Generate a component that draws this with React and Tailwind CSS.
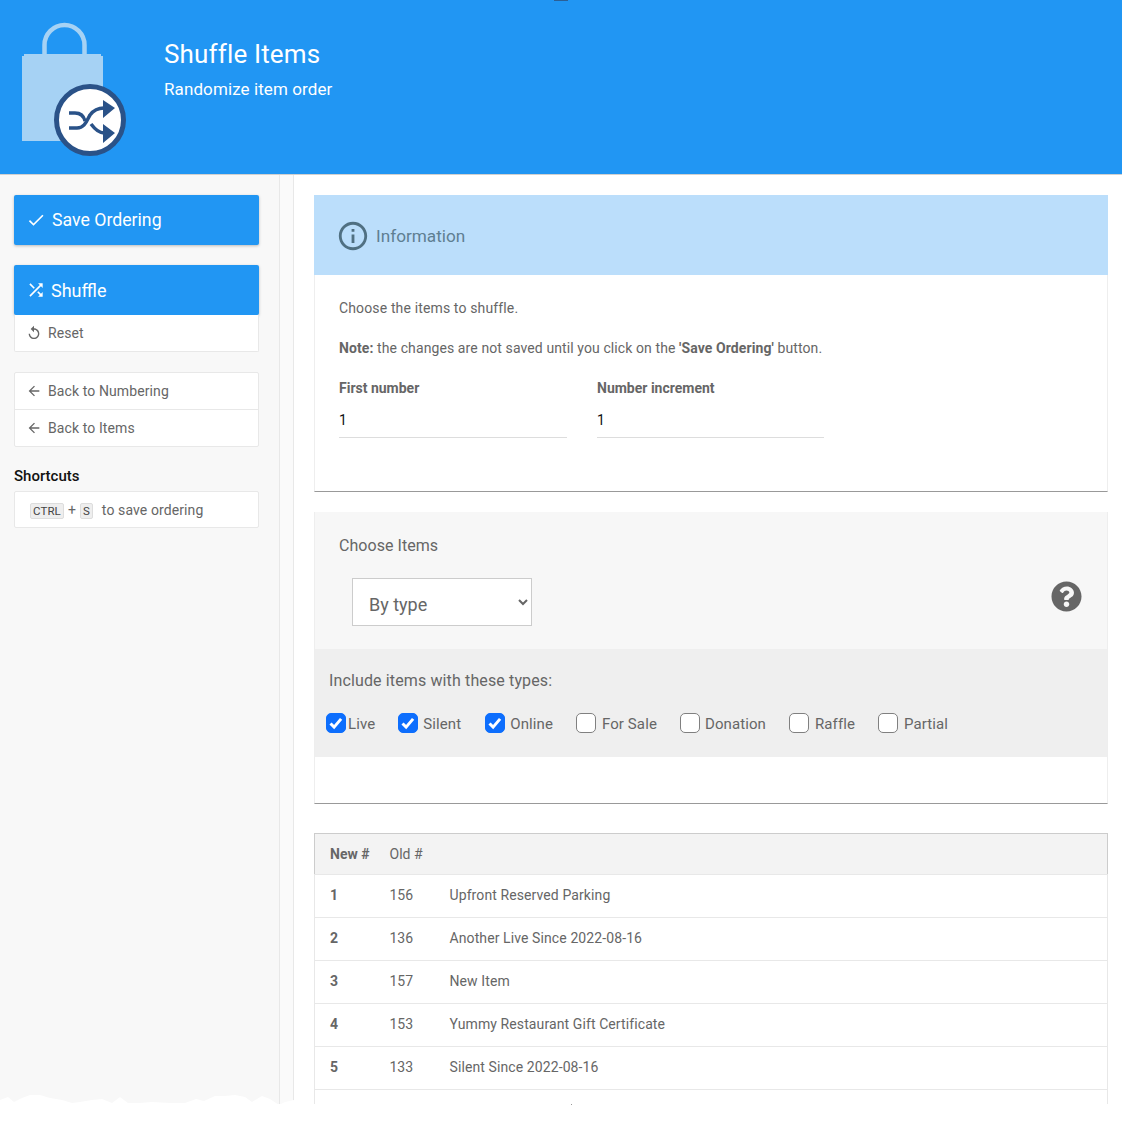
import React from 'react';
import { MdCheck, MdShuffle, MdReplay, MdArrowBack, MdInfoOutline } from 'react-icons/md';
import { FaQuestionCircle } from 'react-icons/fa';

const items = [
  { id: 1, old: 156, name: 'Upfront Reserved Parking' },
  { id: 2, old: 136, name: 'Another Live Since 2022-08-16' },
  { id: 3, old: 157, name: 'New Item' },
  { id: 4, old: 153, name: 'Yummy Restaurant Gift Certificate' },
  { id: 5, old: 133, name: 'Silent Since 2022-08-16' },
];

const types = [
  { label: 'Live', checked: true, className: 'ml-[-3px] gap-[2px]' },
  { label: 'Silent', checked: true, className: 'ml-[23px] gap-[5px]' },
  { label: 'Online', checked: true, className: 'ml-[24px] gap-[5px]' },
  { label: 'For Sale', checked: false, className: 'ml-[23px] gap-[6px]' },
  { label: 'Donation', checked: false, className: 'ml-[23px] gap-[5px]' },
  { label: 'Raffle', checked: false, className: 'ml-[23px] gap-[6px]' },
  { label: 'Partial', checked: false, className: 'ml-[23px] gap-[6px]' },
];

function BagLogo() {
  return (
    <svg width="130" height="145" viewBox="0 0 130 145" className="block">
      <path d="M44.5 41V31a20 20 0 0 1 40 0v10" fill="none" stroke="#a6d2f4" strokeWidth="4.5" />
      <path d="M24 40h77v2h2v85H22V42h2z" fill="#a6d2f4" />
      <circle cx="90" cy="106" r="33.5" fill="#fff" stroke="#2a5288" strokeWidth="5" />
      <path d="M69 99h6c6 0 9 4 10 8" fill="none" stroke="#2a5288" strokeWidth="3.5" />
      <path d="M69 114h8c8 0 10-8 13-13 3-4 7-7 14-7" fill="none" stroke="#2a5288" strokeWidth="3.5" />
      <path d="M91 110c3 4 7 9 13 9" fill="none" stroke="#2a5288" strokeWidth="3.5" />
      <path d="M103 86l12 8-12 10zM103 110l12 9-12 10z" fill="#2a5288" />
    </svg>
  );
}

function TypeCheck({ label, checked, className }) {
  return (
    <label className={`flex items-center text-[15px] tracking-[0.1px] text-[#666] ${className}`}>
      <span className="relative -top-[1.5px] block h-[20px] w-[20px]">
        <input
          type="checkbox"
          defaultChecked={checked}
          className="block h-[20px] w-[20px] appearance-none rounded-[5px] border border-[#808080] bg-white checked:border-[#0d6efd] checked:bg-[#0d6efd]"
        />
        {checked && (
          <svg viewBox="0 0 20 20" className="pointer-events-none absolute inset-0 h-[20px] w-[20px]">
            <path d="M4.5 10.5l3.6 3.6 7-8.2" fill="none" stroke="#fff" strokeWidth="3" />
          </svg>
        )}
      </span>
      <span>{label}</span>
    </label>
  );
}

function SideLink({ icon, children, last }) {
  return (
    <div className={`flex items-center pl-[11px] text-[14px] tracking-[0.1px] text-[#666] ${last ? 'h-[36px]' : 'h-[37px] border-b border-[#e8e8e8]'}`}>
      <span className="mr-[6px] w-[16px] text-[#666]">{icon}</span>
      {children}
    </div>
  );
}

function TornEdge() {
  return (
    <svg width="300" height="14" viewBox="0 1092 300 14" className="absolute left-0 top-[1092px]">
      <path
        d="M0 1100L8 1097L14 1102L22 1098L30 1095L40 1095L50 1098L62 1100L72 1103L80 1102L92 1100L102 1099L112 1103L120 1097L128 1103L140 1103L152 1102L170 1103L185 1103L196 1099L204 1101L215 1096L225 1096L235 1095L245 1097L252 1102L262 1096L270 1099L279 1105L285 1102L294 1100L300 1100V1106H0Z"
        fill="#fff"
      />
    </svg>
  );
}

export default function App() {
  return (
    <div className="relative h-[1130px] bg-white font-['Roboto',sans-serif] text-[14px] text-[#666]">
      <div className="h-[1104px] overflow-hidden">
        <header className="relative flex h-[175px] border-b border-[#d0d0d0] bg-[#2196f3]">
          <div className="w-[164px] pt-[14px]">
            <BagLogo />
          </div>
          <div className="pt-[37px] text-white">
            <h1 className="text-[26px] leading-[34px] tracking-[0.15px]">Shuffle Items</h1>
            <p className="mt-[7px] text-[17px] leading-[22px] tracking-[0.1px]">Randomize item order</p>
          </div>
          <div className="absolute left-[554px] top-0 h-px w-[14px] bg-[#2b5f95]" />
        </header>

        <div className="flex h-[929px]">
          <aside className="w-[280px] shrink-0 border-r border-[#e8e8e8] bg-[#f8f8f8] px-[14px] pt-[20px]">
            <button className="flex h-[50px] w-[245px] items-center rounded-[2px] bg-[#2196f3] pl-[12px] text-[17.7px] text-white shadow-[0_1px_3px_rgba(0,0,0,0.25)]">
              <MdCheck size={20} className="mr-[6px]" />
              Save Ordering
            </button>

            <button className="mt-[20px] flex h-[50px] w-[245px] items-center rounded-[2px] bg-[#2196f3] pl-[12px] text-[18px] text-white shadow-[0_1px_3px_rgba(0,0,0,0.25)]">
              <MdShuffle size={20} className="mr-[5px]" />
              Shuffle
            </button>
            <div className="w-[245px] rounded-b-[2px] border border-t-0 border-[#e8e8e8] bg-white">
              <SideLink icon={<MdReplay size={16} />} last>Reset</SideLink>
            </div>

            <div className="mt-[20px] w-[245px] rounded-[2px] border border-[#e8e8e8] bg-white">
              <SideLink icon={<MdArrowBack size={16} />}>Back to Numbering</SideLink>
              <SideLink icon={<MdArrowBack size={16} />} last>Back to Items</SideLink>
            </div>

            <h2 className="mt-[20px] text-[15px] font-medium leading-[18px] text-[#111]">Shortcuts</h2>
            <div className="mt-[6px] flex h-[37px] w-[245px] items-center rounded-[2px] border border-[#e8e8e8] bg-white pl-[15px] pt-[2px] text-[14px] tracking-[0.1px]">
              <kbd className="rounded-[2px] border border-[#ddd] bg-[#eee] px-[2px] font-['Roboto',sans-serif] text-[11.5px] leading-[14px] text-[#444]">CTRL</kbd>
              <span className="mx-[4px]">+</span>
              <kbd className="rounded-[2px] border border-[#ddd] bg-[#eee] px-[2px] font-['Roboto',sans-serif] text-[11.5px] leading-[14px] text-[#444]">S</kbd>
              <span className="ml-[9px]">to save ordering</span>
            </div>
          </aside>

          <div className="w-[14px] shrink-0 border-r border-[#e8e8e8] bg-[#fafafa]" />

          <main className="w-[828px] shrink-0 pl-[20px] pr-[14px] pt-[20px]">
            <section className="h-[297px] border-b border-l border-r border-b-[#999] border-l-[#eee] border-r-[#eee] bg-white">
              <div className="-mx-px flex h-[80px] items-center bg-[#bbdefb] pl-[22px] pt-[1px] text-[#5f7f92]">
                <MdInfoOutline size={34} className="text-[#507082]" />
                <span className="ml-[6px] pt-[2px] text-[17.2px]">Information</span>
              </div>
              <div className="pl-[24px] pt-[24px]">
                <p className="leading-[18px] tracking-[0.14px]">Choose the items to shuffle.</p>
                <p className="mt-[22px] leading-[18px] tracking-[0.1px]">
                  <b className="font-bold">Note:</b> the changes are not saved until you click on the <b className="font-bold">'Save Ordering'</b> button.
                </p>
                <div className="mt-[22px] flex gap-[30px]">
                  <div className="w-[228px]">
                    <label className="block font-bold leading-[18px]">First number</label>
                    <input readOnly value="1" className="mt-[5px] block h-[36px] w-full border-b border-[#ddd] text-[14px] text-[#111] outline-none" />
                  </div>
                  <div className="w-[227px]">
                    <label className="block font-bold leading-[18px]">Number increment</label>
                    <input readOnly value="1" className="mt-[5px] block h-[36px] w-full border-b border-[#ddd] text-[14px] text-[#111] outline-none" />
                  </div>
                </div>
              </div>
            </section>

            <section className="mt-[20px] h-[292px] border-b border-l border-r border-b-[#999] border-l-[#eee] border-r-[#eee] bg-white">
              <div className="relative h-[137px] bg-[#f7f7f7] pl-[24px] pt-[24px]">
                <h3 className="text-[16px] leading-[20px] tracking-[0.05px]">Choose Items</h3>
                <select defaultValue="type" className="ml-[13px] mt-[22px] block h-[48px] w-[180px] border border-[#ccc] bg-white pl-[12px] pt-[4px] text-[18px] text-[#666]">
                  <option value="type">By type</option>
                  <option value="all">All items</option>
                </select>
                <FaQuestionCircle size={31} className="absolute right-[25px] top-[69px] text-[#666]" />
              </div>
              <div className="h-[108px] bg-[#efefef] pl-[14px] pt-[22px]">
                <p className="text-[16px] leading-[20px] tracking-[0.13px]">Include items with these types:</p>
                <div className="mt-[22px] flex items-center">
                  {types.map((t) => (
                    <TypeCheck key={t.label} {...t} />
                  ))}
                </div>
              </div>
            </section>

            <table className="mt-[29px] w-full border-collapse border-x border-t border-x-[#e8e8e8] border-t-[#ccc] text-left text-[14px]">
              <thead>
                <tr className="h-[41px] border-x border-b border-x-[#ccc] border-b-[#e8e8e8] bg-[#f3f3f3]">
                  <th className="w-[75px] pl-[15px] font-bold">New #</th>
                  <th className="w-[60px] font-normal">Old #</th>
                  <th />
                </tr>
              </thead>
              <tbody>
                {items.map((item) => (
                  <tr key={item.id} className="h-[43px] border-b border-[#e8e8e8]">
                    <td className="pb-[2px] pl-[15px] font-bold">{item.id}</td>
                    <td className="pb-[2px]">{item.old}</td>
                    <td className="pb-[2px] tracking-[0.1px]">{item.name}</td>
                  </tr>
                ))}
                <tr className="h-[43px]">
                  <td />
                  <td />
                  <td />
                </tr>
              </tbody>
            </table>
          </main>
        </div>
      </div>
      <span className="absolute left-[571px] top-[1104px] h-px w-px bg-[#999]" />
      <TornEdge />
    </div>
  );
}
